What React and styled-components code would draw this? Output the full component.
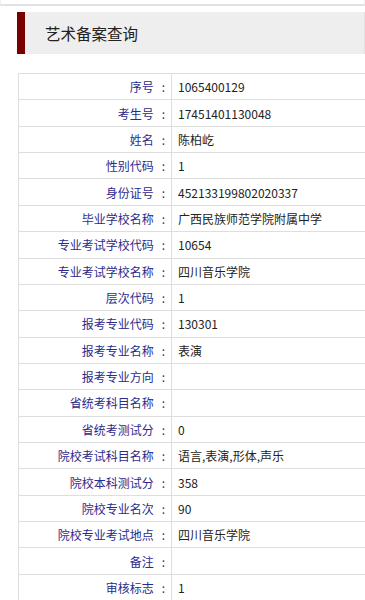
import React from 'react';
import styled, { createGlobalStyle } from 'styled-components';

const GlobalStyle = createGlobalStyle`
  html, body {
    margin: 0;
    padding: 0;
    background: #fff;
    overflow: hidden;
  }
  body {
    font-family: "Noto Sans CJK SC", "Noto Sans", sans-serif;
  }
`;

const Page = styled.div`
  width: 365px;
  height: 600px;
  overflow: hidden;
`;

const TopStrip = styled.div`
  height: 4px;
  border-bottom: 2px solid #e2e2e2;
  border-left: 1px solid #f0f0f0;
  border-right: 1px solid #f0f0f0;
`;

const Header = styled.div`
  margin: 6px 0 0 17px;
  height: 42px;
  display: flex;
  align-items: center;
  background: #eeeeee;
  border-left: 8px solid #7a0000;
  border-right: 1px solid #e2e2e2;
  padding-left: 20px;
`;

const Title = styled.h3`
  margin: 0;
  font-size: 15.5px;
  font-weight: 400;
  color: #222;
`;

const Table = styled.table`
  margin: 19px 0 0 18px;
  width: 370px;
  border-collapse: collapse;
  table-layout: fixed;
`;

const Row = styled.tr`
  height: 26.37px;
`;

const Label = styled.td`
  width: 146px;
  padding: 0 6px 0 0;
  border: 1px solid #dedede;
  text-align: right;
  font-size: 12px;
  color: #2b2b8c;
  white-space: nowrap;
`;

const Colon = styled.span`
  margin-left: 8px;
`;

const Value = styled.td`
  padding: 0 0 0 6px;
  border: 1px solid #dedede;
  font-size: 12px;
  color: #222;
  white-space: nowrap;
`;

const rows = [
  ['序号', '1065400129'],
  ['考生号', '17451401130048'],
  ['姓名', '陈柏屹'],
  ['性别代码', '1'],
  ['身份证号', '452133199802020337'],
  ['毕业学校名称', '广西民族师范学院附属中学'],
  ['专业考试学校代码', '10654'],
  ['专业考试学校名称', '四川音乐学院'],
  ['层次代码', '1'],
  ['报考专业代码', '130301'],
  ['报考专业名称', '表演'],
  ['报考专业方向', ''],
  ['省统考科目名称', ''],
  ['省统考测试分', '0'],
  ['院校考试科目名称', '语言,表演,形体,声乐'],
  ['院校本科测试分', '358'],
  ['院校专业名次', '90'],
  ['院校专业考试地点', '四川音乐学院'],
  ['备注', ''],
  ['审核标志', '1'],
];

export default function App() {
  return (
    <Page>
      <GlobalStyle />
      <TopStrip />
      <Header>
        <Title>艺术备案查询</Title>
      </Header>
      <Table>
        <tbody>
          {rows.map(([label, value]) => (
            <Row key={label}>
              <Label>
                {label}
                <Colon>:</Colon>
              </Label>
              <Value>{value}</Value>
            </Row>
          ))}
        </tbody>
      </Table>
    </Page>
  );
}
